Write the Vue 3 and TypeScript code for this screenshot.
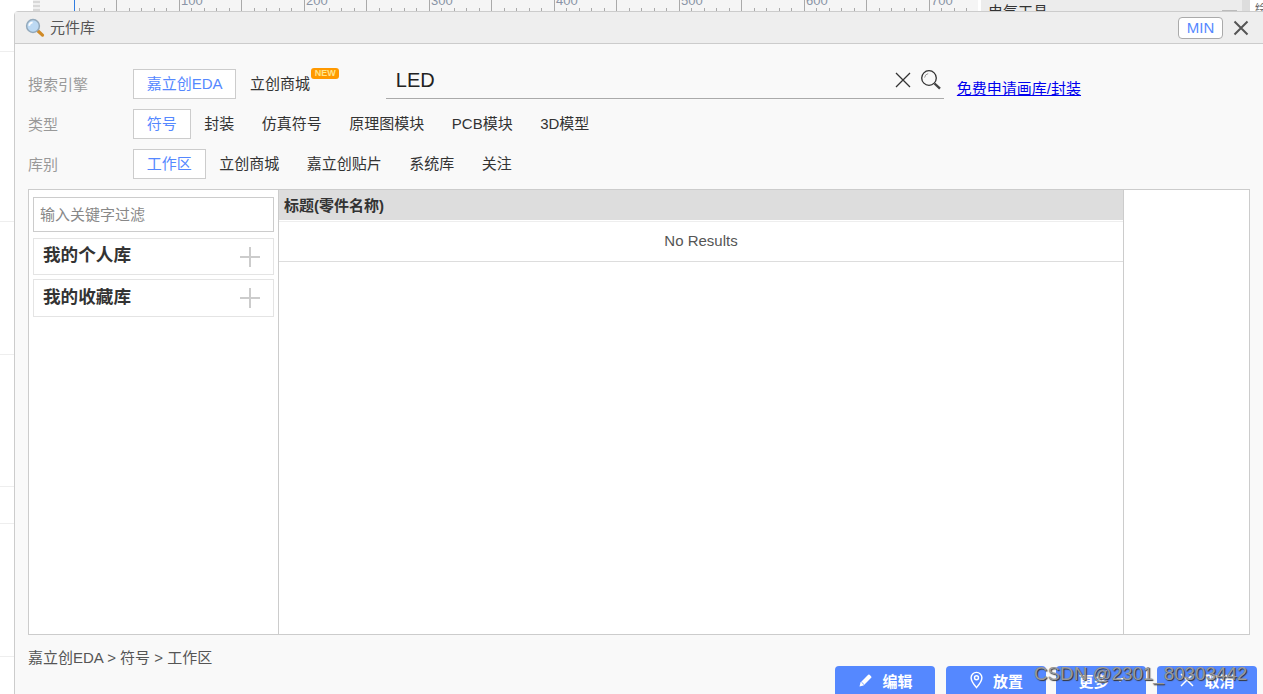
<script setup lang="ts">
const engines = [{ t: '嘉立创EDA', on: true }, { t: '立创商城', on: false, badge: true }]
const types = ['符号', '封装', '仿真符号', '原理图模块', 'PCB模块', '3D模型']
const libs = ['工作区', '立创商城', '嘉立创贴片', '系统库', '关注']
const ticks = Array.from({ length: 72 }, (_, i) => i)
const labels = [
  { t: '100', x: 148 }, { t: '200', x: 273 }, { t: '300', x: 398 }, { t: '400', x: 523 },
  { t: '500', x: 648 }, { t: '600', x: 773 }, { t: '700', x: 898 },
]
const hlines = [51, 221, 354, 486, 523, 656]
function tickClass(i: number) {
  return i % 5 === 3 ? 'tick major' : 'tick'
}
</script>

<template>
  <div class="stage">
    <div class="canvas-bg">
      <div v-for="y in hlines" :key="y" class="hline" :style="{ top: y + 'px' }"></div>
    </div>
    <div class="ruler">
      <div class="dots"></div>
      <div class="ticks">
        <i v-for="i in ticks" :key="i" :class="tickClass(i)"></i>
      </div>
      <span v-for="l in labels" :key="l.t" class="rlabel" :style="{ left: l.x + 'px' }">{{ l.t }}</span>
      <b class="cursor"></b>
    </div>
    <div class="side-panel"><span>电气工具</span><i class="dash"></i></div>
    <div class="side-bar"></div>
    <div class="side-text">绘</div>

    <section class="dialog">
      <header class="head">
        <svg class="head-ico" width="20" height="20" viewBox="0 0 20 20">
          <path d="M12.5 12.5l5 4.6" stroke="#d08a26" stroke-width="3.2" stroke-linecap="round" />
          <circle cx="8" cy="8" r="6.4" fill="#bcd9f3" stroke="#93a9bb" stroke-width="1.5" />
          <path d="M4.2 7.8a3.8 3.8 0 0 1 3.4-3.5" stroke="#fff" stroke-width="1.7" fill="none" />
        </svg>
        <span class="head-title">元件库</span>
        <button class="min">MIN</button>
        <svg class="head-x" width="16" height="16" viewBox="0 0 16 16">
          <path d="M1.5 1.5l13 13M14.5 1.5l-13 13" stroke="#555" stroke-width="2" />
        </svg>
      </header>

      <div class="body">
        <div class="filters">
          <div class="frow">
            <span class="flabel">搜索引擎</span>
            <span v-for="e in engines" :key="e.t" class="opt" :class="{ on: e.on }">
              {{ e.t }}<em v-if="e.badge" class="new">NEW</em>
            </span>
            <div class="search">
              <span class="search-val">LED</span>
              <svg class="sx" width="18" height="18" viewBox="0 0 18 18">
                <path d="M2 2l14 14M16 2L2 16" stroke="#333" stroke-width="1.3" />
              </svg>
              <svg class="sg" width="22" height="22" viewBox="0 0 22 22">
                <circle cx="9" cy="9" r="7.3" fill="none" stroke="#333" stroke-width="1.3" />
                <path d="M4.6 8.6a4.6 4.6 0 0 1 3.6-4" fill="none" stroke="#999" stroke-width="1" />
                <path d="M14.5 14.5l5.5 5.2" stroke="#444" stroke-width="2.4" />
              </svg>
            </div>
            <a class="apply" href="#">免费申请画库/封装</a>
          </div>
          <div class="frow">
            <span class="flabel">类型</span>
            <span v-for="(t, i) in types" :key="t" class="opt" :class="{ on: i === 0 }">{{ t }}</span>
          </div>
          <div class="frow">
            <span class="flabel">库别</span>
            <span v-for="(t, i) in libs" :key="t" class="opt" :class="{ on: i === 0 }">{{ t }}</span>
          </div>
        </div>

        <div class="grid">
          <aside class="left">
            <input class="filter" placeholder="输入关键字过滤" />
            <div class="lib"><strong>我的个人库</strong><span class="plus"></span></div>
            <div class="lib lib2"><strong>我的收藏库</strong><span class="plus"></span></div>
          </aside>
          <main class="mid">
            <div class="th">标题(零件名称)</div>
            <div class="nores">No Results</div>
          </main>
          <aside class="right"></aside>
        </div>

        <div class="crumb">嘉立创EDA &gt; 符号 &gt; 工作区</div>

        <div class="actions">
          <button class="btn b1">
            <svg width="14" height="14" viewBox="0 0 14 14"><path d="M0.5 13.5l1-4L9.2 1.8a1 1 0 0 1 1.4 0l1.6 1.6a1 1 0 0 1 0 1.4L4.5 12.5z" fill="#fff" /><path d="M2.4 9l2.6 2.6" stroke="#5588ff" stroke-width=".8" /></svg>
            编辑
          </button>
          <button class="btn b2">
            <svg width="15" height="18" viewBox="0 0 16 20"><path d="M8 1.5a6 6 0 0 0-6 6c0 4 6 11 6 11s6-7 6-11a6 6 0 0 0-6-6z" fill="none" stroke="#fff" stroke-width="1.6" /><circle cx="8" cy="7.5" r="2.2" fill="none" stroke="#fff" stroke-width="1.6" /></svg>
            放置
          </button>
          <button class="btn b3">更多<i class="caret"></i></button>
          <button class="btn b4">
            <svg width="16" height="16" viewBox="0 0 16 16"><path d="M2 2l12 12M14 2L2 14" stroke="#fff" stroke-width="1.5" /></svg>
            取消
          </button>
        </div>
      </div>
    </section>
    <div class="watermark">CSDN @2301_80303442</div>
  </div>
</template>

<style>
html, body { margin: 0; overflow: hidden; }
</style>

<style scoped>
.stage {
  position: relative;
  width: 1263px;
  height: 694px;
  overflow: hidden;
  background: #fff;
  font-family: "Liberation Sans", "Noto Sans CJK SC", sans-serif;
  font-size: 15px;
  color: #333;
}
.canvas-bg { position: absolute; left: 0; top: 0; width: 15px; height: 694px; }
.hline { position: absolute; left: 0; width: 15px; height: 1px; background: #eee; }
.ruler {
  position: absolute; left: 33px; top: 0; width: 945px; height: 11px;
  background: #f5f5f5; overflow: hidden;
}
.dots {
  position: absolute; left: 0; top: 0; width: 7px; height: 11px;
  background: repeating-linear-gradient(0deg, #d8d8d8 0 2px, #f0f0f0 2px 4px);
}
.ticks { display: flex; align-items: flex-end; height: 11px; padding-left: 45.5px; }
.tick { flex: 0 0 12.5px; box-sizing: border-box; height: 3px; border-left: 1px solid #aaa; }
.tick.major { height: 11px; }
.rlabel { position: absolute; top: -7px; font-size: 13px; color: #8a94a6; }
.cursor { position: absolute; left: 41px; top: 0; width: 1px; height: 11px; background: #2f7de1; }
.side-panel {
  position: absolute; left: 981px; top: 0; width: 261px; height: 11px;
  background: #ececec; overflow: hidden;
}
.side-panel span { position: absolute; left: 7px; top: 3px; line-height: 18px; font-size: 15px; color: #333; }
.dash { position: absolute; left: 241px; top: 10px; width: 15px; height: 1px; background: #bbb; }
.side-bar { position: absolute; left: 1242px; top: 0; width: 8px; height: 11px; background: #ddd; }
.side-text {
  position: absolute; left: 1255px; top: 3px; width: 8px; height: 8px;
  overflow: hidden; font-size: 12px; line-height: 12px; color: #666;
}

.dialog {
  position: absolute; left: 14px; top: 11px; width: 1260px; height: 700px;
  box-sizing: border-box;
  border: 1px solid #ccc;
  border-radius: 4px 0 0 0;
  background: #f9f9f9;
  display: flex; flex-direction: column;
}
.head {
  flex: 0 0 31px;
  display: flex; align-items: center;
  padding-left: 10px;
  background: #eee;
  border-bottom: 1px solid #ccc;
}
.head-ico { margin-right: 5px; }
.head-title { font-size: 15px; color: #555; margin-top: -2px; }
.min {
  margin-left: auto; margin-right: 10px;
  width: 45px; height: 22px; padding: 0;
  border: 1px solid #aaa; border-radius: 4px;
  background: #fff; color: #5588ff;
  font: 15px "Liberation Sans", sans-serif;
}
.head-x { margin-right: 24px; }

.body { flex: 1; display: flex; flex-direction: column; padding: 25px 0 0 13px; }
.filters { display: flex; flex-direction: column; gap: 10px; }
.frow { display: flex; align-items: center; height: 30px; }
.flabel { width: 105px; color: #999; font-size: 15px; margin-top: -2px; }
.opt {
  position: relative;
  box-sizing: border-box;
  height: 30px; line-height: 28px;
  padding: 0 12.75px;
  border: 1px solid transparent;
  color: #333;
}
.opt.on { border-color: #ccc; background: #fff; color: #5588ff; }
.new {
  position: absolute; left: 74px; top: -2px;
  width: 28px; height: 11px;
  border-radius: 3px;
  background: #f90; color: #ffe58a;
  font: bold 9px/11px "Liberation Sans", sans-serif;
  text-align: center;
}
.search {
  display: flex; align-items: center;
  width: 558px; height: 38px;
  margin-left: 62px; margin-top: -8px;
  border-bottom: 1px solid #aaa;
  box-sizing: border-box;
  padding-left: 10px;
}
.search-val { font-size: 20px; color: #222; flex: 1; margin-top: 2px; }
.sx { margin-right: 8px; margin-top: 1px; }
.sg { margin-right: 2px; }
.apply { margin-left: 13px; margin-top: 6px; color: #00e; font-size: 15px; }

.grid {
  margin-top: 10px;
  width: 1222px; height: 446px;
  box-sizing: border-box;
  border: 1px solid #ccc;
  background: #fff;
  display: flex;
}
.left {
  flex: 0 0 250px; box-sizing: border-box;
  border-right: 1px solid #ccc;
  padding: 7px 4px 0;
  display: flex; flex-direction: column;
}
.filter {
  box-sizing: border-box; width: 241px; height: 35px;
  border: 1px solid #ccc; padding: 0 6px;
  font: 15px "Liberation Sans", "Noto Sans CJK SC", sans-serif;
  outline: none;
  background: #fff;
}
.filter::placeholder { color: #888; }
.lib {
  box-sizing: border-box; width: 241px; height: 37px;
  margin-top: 6px;
  border: 1px solid #e4e4e4;
  display: flex; align-items: center; justify-content: space-between;
  padding: 0 13px 0 9px;
}
.lib2 { margin-top: 4px; height: 38px; }
.lib strong { font-size: 17.6px; color: #333; margin-top: -6px; }
.plus { position: relative; width: 20px; height: 20px; }
.plus::before { content: ""; position: absolute; left: 0; top: 9px; width: 20px; height: 2px; background: #ccc; }
.plus::after { content: ""; position: absolute; left: 9px; top: 0; width: 2px; height: 20px; background: #ccc; }
.mid { flex: 0 0 845px; box-sizing: border-box; border-right: 1px solid #ccc; }
.th {
  box-sizing: border-box;
  padding-left: 5px;
  background: #ddd; color: #333;
  font-weight: bold; font-size: 15px;
  border-bottom: 2px solid #fff;
  height: 32px; line-height: 31px;
}
.nores {
  height: 41px; line-height: 38px; box-sizing: border-box;
  border-top: 1px solid #eee; border-bottom: 1px solid #ddd;
  text-align: center; color: #555; font-size: 15px;
  margin-top: -1px;
}
.right { flex: 1; }
.crumb { margin-top: 14px; height: 18px; line-height: 18px; color: #555; font-size: 15px; }
.actions { display: flex; margin-top: -1px; padding-left: 807px; }
.btn {
  box-sizing: border-box; height: 30px;
  display: flex; align-items: center; justify-content: center; gap: 9px;
  border: 0; border-radius: 4px 4px 0 0;
  background: #5588ff; color: #fff;
  font: bold 15px "Liberation Sans", "Noto Sans CJK SC", sans-serif;
  padding: 0 0 2px;
}
.b1 { width: 100px; margin-right: 11px; padding-left: 2px; }
.b2 { width: 100px; margin-right: 10px; }
.b3 { width: 90px; margin-right: 11px; gap: 7px; }
.b4 { width: 100px; }
.caret { width: 0; height: 0; border: 4px solid transparent; border-top-color: #fff; margin-top: 4px; }
.watermark {
  position: absolute; left: 1034px; top: 663px;
  font-size: 18.8px; color: #999;
  text-shadow: 1px 1px 1px #333;
  white-space: nowrap;
}
</style>
